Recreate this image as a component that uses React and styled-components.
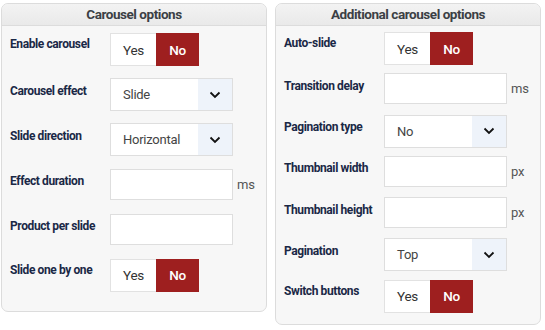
import React from "react";
import styled, { createGlobalStyle } from "styled-components";

const Global = createGlobalStyle`
  html, body { margin: 0; padding: 0; background: #fff; }
  body { font-family: Roboto, "Liberation Sans", Arial, sans-serif; }
`;

const Page = styled.div`
  display: flex;
  align-items: flex-start;
  gap: 8px;
  padding: 3px 0 0 1px;
`;

const Panel = styled.section`
  width: ${(p) => p.$w}px;
  box-sizing: border-box;
  border: 1px solid #dcdcdc;
  border-radius: 7px;
  background: #f7f7f7;
  overflow: hidden;
`;

const Header = styled.div`
  height: 21px;
  border-bottom: 1px solid #dcdcdc;
  background: linear-gradient(#f3f3f3, #e9e9e9);
  color: #3b3f45;
  font-size: 13.5px;
  letter-spacing: -0.45px;
  font-weight: 700;
  line-height: 20px;
  text-align: center;
`;

const Body = styled.div`
  padding: ${(p) => p.$pt}px 0 ${(p) => p.$pb}px 8px;
`;

const Row = styled.div`
  display: flex;
  align-items: flex-start;
  height: ${(p) => p.$h}px;
`;

const Label = styled.div`
  width: 100px;
  flex: none;
  padding-top: ${(p) => (p.$toggle ? 3 : 4.5)}px;
  font-size: 12px;
  letter-spacing: -0.4px;
  line-height: 16px;
  font-weight: 700;
  color: #1a2846;
`;

const Toggle = styled.div`
  display: flex;
  width: 89px;
  height: 33px;
  box-sizing: border-box;
  border: 1px solid #e2e2e2;
  background: #fff;
`;

const ToggleOpt = styled.div`
  flex: ${(p) => (p.$on ? "0 0 43px" : "1")};
  display: flex;
  align-items: center;
  justify-content: center;
  font-size: 13.5px;
  letter-spacing: -0.3px;
  font-weight: ${(p) => (p.$on ? 500 : 400)};
  color: ${(p) => (p.$on ? "#fff" : "#333")};
  background: ${(p) => (p.$on ? "#9e1f1f" : "#fff")};
  margin: ${(p) => (p.$on ? "-1px -1px -1px 0" : "0")};
`;

const Select = styled.div`
  display: flex;
  width: 123px;
  height: 33px;
  box-sizing: border-box;
  border: 1px solid #dedede;
  background: #fff;
`;

const SelectValue = styled.div`
  flex: 1;
  display: flex;
  align-items: center;
  padding-left: 12px;
  font-size: 13px;
  letter-spacing: -0.25px;
  color: #444;
`;

const SelectArrow = styled.div`
  width: 34px;
  display: flex;
  align-items: center;
  justify-content: center;
  background: #eef3fa;
`;

const InputWrap = styled.div`
  display: flex;
  align-items: center;
  gap: 4px;
`;

const Input = styled.div`
  width: 123px;
  height: 31px;
  box-sizing: border-box;
  border: 1px solid #dedede;
  background: #fff;
`;

const Unit = styled.span`
  font-size: 13px;
  letter-spacing: -0.2px;
  color: #555;
`;

const Chevron = () => (
  <svg width="12" height="8" viewBox="0 0 12 8">
    <path d="M1.5 1.5 L6 6 L10.5 1.5" fill="none" stroke="#111" strokeWidth="1.8" />
  </svg>
);

function Control({ c }) {
  if (c.type === "toggle")
    return (
      <Toggle>
        <ToggleOpt>Yes</ToggleOpt>
        <ToggleOpt $on>No</ToggleOpt>
      </Toggle>
    );
  if (c.type === "select")
    return (
      <Select>
        <SelectValue>{c.value}</SelectValue>
        <SelectArrow>
          <Chevron />
        </SelectArrow>
      </Select>
    );
  return (
    <InputWrap>
      <Input />
      {c.unit && <Unit>{c.unit}</Unit>}
    </InputWrap>
  );
}

const left = [
  { label: "Enable carousel", type: "toggle" },
  { label: "Carousel effect", type: "select", value: "Slide" },
  { label: "Slide direction", type: "select", value: "Horizontal" },
  { label: "Effect duration", type: "input", unit: "ms" },
  { label: "Product per slide", type: "input" },
  { label: "Slide one by one", type: "toggle" },
];

const right = [
  { label: "Auto-slide", type: "toggle" },
  { label: "Transition delay", type: "input", unit: "ms" },
  { label: "Pagination type", type: "select", value: "No" },
  { label: "Thumbnail width", type: "input", unit: "px" },
  { label: "Thumbnail height", type: "input", unit: "px" },
  { label: "Pagination", type: "select", value: "Top" },
  { label: "Switch buttons", type: "toggle" },
];

function OptionsPanel({ title, rows, w, rowH, pt, pb }) {
  return (
    <Panel $w={w}>
      <Header>{title}</Header>
      <Body $pt={pt} $pb={pb}>
        {rows.map((r) => (
          <Row key={r.label} $h={rowH}>
            <Label $toggle={r.type === "toggle"}>{r.label}</Label>
            <Control c={r} />
          </Row>
        ))}
      </Body>
    </Panel>
  );
}

export default function App() {
  return (
    <>
      <Global />
      <Page>
        <OptionsPanel title="Carousel options" rows={left} w={266} rowH={45.2} pt={7} pb={7} />
        <OptionsPanel title="Additional carousel options" rows={right} w={266} rowH={41.3} pt={6} pb={3} />
      </Page>
    </>
  );
}
